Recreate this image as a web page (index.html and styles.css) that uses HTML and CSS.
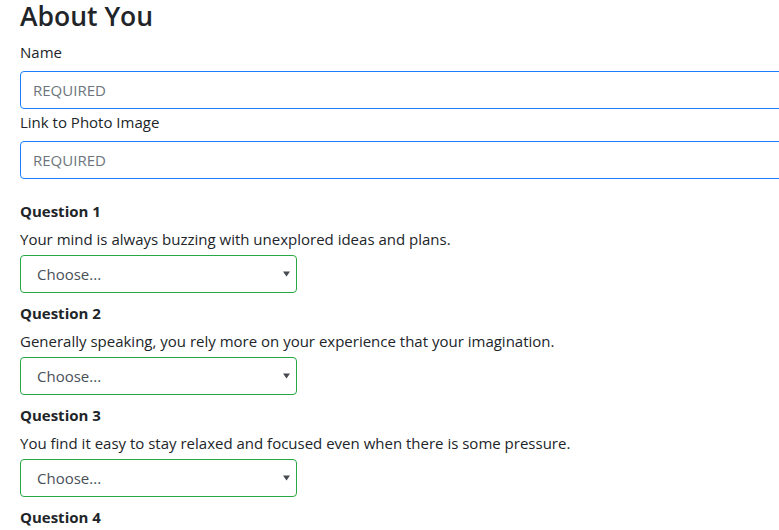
FILE: index.html
```html
<!DOCTYPE html>
<html lang="en">
<head>
<meta charset="utf-8">
<title>About You</title>
<link rel="stylesheet" href="styles.css">
</head>
<body>
<form class="survey">
  <h3 class="title">About You</h3>
  <label class="field-label" for="name">Name</label>
  <input class="text-input" id="name" type="text" placeholder="REQUIRED">
  <label class="field-label" for="photo">Link to Photo Image</label>
  <input class="text-input" id="photo" type="text" placeholder="REQUIRED">

  <div class="questions">
    <div class="question">
      <div class="q-title">Question 1</div>
      <p class="q-text">Your mind is always buzzing with unexplored ideas and plans.</p>
      <select class="choice"><option>Choose...</option></select>
    </div>
    <div class="question">
      <div class="q-title">Question 2</div>
      <p class="q-text">Generally speaking, you rely more on your experience that your imagination.</p>
      <select class="choice"><option>Choose...</option></select>
    </div>
    <div class="question">
      <div class="q-title">Question 3</div>
      <p class="q-text">You find it easy to stay relaxed and focused even when there is some pressure.</p>
      <select class="choice"><option>Choose...</option></select>
    </div>
    <div class="question">
      <div class="q-title">Question 4</div>
    </div>
  </div>
</form>
</body>
</html>
```
FILE: styles.css
```css
html, body {
  margin: 0;
  padding: 0;
  overflow: hidden;
  background: #ffffff;
}

body {
  font-family: "Open Sans", "Noto Sans", sans-serif;
  font-size: 15px;
  color: #212529;
}

.survey {
  display: flex;
  flex-direction: column;
  align-items: flex-start;
  padding: 0 0 0 20px;
}

.title {
  margin: 0 0 8px 0;
  font-size: 26.5px;
  font-weight: 600;
  line-height: 32px;
  color: #212529;
}

.field-label {
  display: block;
  line-height: 24px;
  margin: 0 0 7px 0;
}

.text-input {
  box-sizing: border-box;
  width: 800px;
  height: 38px;
  margin: 0 0 1px 0;
  padding: 0 12px;
  border: 1px solid #1a7fff;
  border-radius: 4px;
  font-family: inherit;
  font-size: 15px;
  color: #495057;
  background: #fff;
  outline: none;
}

.text-input::placeholder {
  color: #6c757d;
  opacity: 1;
}

.questions {
  display: flex;
  flex-direction: column;
  gap: 8px;
  margin-top: 19px;
}

.question {
  display: flex;
  flex-direction: column;
  align-items: flex-start;
  gap: 4px;
}

.q-title {
  font-weight: 700;
  line-height: 24px;
}

.q-text {
  margin: 0;
  line-height: 24px;
}

.choice {
  box-sizing: border-box;
  width: 277px;
  height: 38px;
  margin: 0;
  padding: 0 24px 0 16px;
  border: 1px solid #28a745;
  border-radius: 4px;
  font-family: inherit;
  font-size: 15px;
  color: #495057;
  background-color: #fff;
  background-image: url("data:image/svg+xml;utf8,<svg xmlns='http://www.w3.org/2000/svg' width='7' height='6' viewBox='0 0 7 6'><path d='M0 0.5h7L3.5 5.5z' fill='%23474b50'/></svg>");
  background-repeat: no-repeat;
  background-position: right 6px center;
  -webkit-appearance: none;
  appearance: none;
  outline: none;
}
```
